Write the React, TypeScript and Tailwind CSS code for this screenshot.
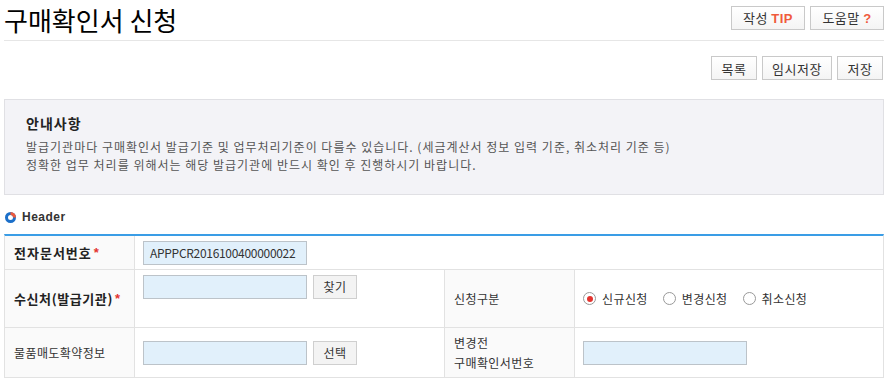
import React from "react";

const font = "font-['Noto_Sans_CJK_KR','Noto_Sans',sans-serif]";

function Btn({ children, className = "" }: { children: React.ReactNode; className?: string }) {
  return (
    <button
      className={`h-[24px] border border-[#c9c9c9] bg-gradient-to-b from-white to-[#f4f4f4] text-[13px] text-[#333] leading-none tracking-[0.5px] ${className}`}
    >
      {children}
    </button>
  );
}

function SmallBtn({ children }: { children: React.ReactNode }) {
  return (
    <button className="h-[24px] w-[44px] border border-[#cfcfcf] bg-[#f3f3f3] text-[12px] text-[#333] leading-none">
      {children}
    </button>
  );
}

function Field({ value = "" }: { value?: string }) {
  return (
    <div className="h-[24px] w-[164px] border border-[#bcc3c9] bg-[#e1f0fb] px-[6px] text-[12px] leading-[22px] tracking-[-0.3px] text-[#333]">
      {value}
    </div>
  );
}

function Radio({ checked, label }: { checked?: boolean; label: string }) {
  return (
    <label className="flex items-center gap-[6px] text-[12px] text-[#333]">
      <span className="flex h-[13px] w-[13px] items-center justify-center rounded-full border border-[#999] bg-white">
        {checked && <span className="h-[6px] w-[6px] rounded-full bg-[#e3342f]" />}
      </span>
      {label}
    </label>
  );
}

function Star() {
  return <span className="ml-[2px] font-['Liberation_Sans',sans-serif] text-[#e3342f]">*</span>;
}

export default function App() {
  return (
    <div className={`h-[381px] w-[890px] overflow-hidden bg-white ${font}`}>
      <div className="mx-[4px] w-[880px]">
        {/* title */}
        <div className="flex h-[41px] items-start justify-between border-b border-[#e6e6e6]">
          <h1 className="text-[26px] leading-[40px] text-black">구매확인서 신청</h1>
          <div className="mt-[6px] flex gap-[5px]">
            <Btn className="w-[74px]">
              작성 <span className="font-bold text-[#f05a3c] font-['Liberation_Sans',sans-serif]">TIP</span>
            </Btn>
            <Btn className="w-[74px]">
              도움말 <span className="font-bold text-[#f05a3c] font-['Liberation_Sans',sans-serif]">?</span>
            </Btn>
          </div>
        </div>

        <div className="mt-[15px] flex justify-end gap-[5px] pr-[1px]">
          <Btn className="w-[46px]">목록</Btn>
          <Btn className="w-[70px]">임시저장</Btn>
          <Btn className="w-[46px]">저장</Btn>
        </div>

        {/* notice */}
        <div className="mt-[19px] h-[96px] border border-[#e0e0e4] bg-[#f3f3f7] px-[21px] pt-[13px]">
          <div className="text-[14px] font-bold leading-[20px] tracking-[1px] text-[#222]">안내사항</div>
          <div className="mt-[5px] text-[12px] leading-[18px] tracking-[1px] text-[#555]">
            <p>발급기관마다 구매확인서 발급기준 및 업무처리기준이 다를수 있습니다. (세금계산서 정보 입력 기준, 취소처리 기준 등)</p>
            <p>정확한 업무 처리를 위해서는 해당 발급기관에 반드시 확인 후 진행하시기 바랍니다.</p>
          </div>
        </div>

        {/* section header */}
        <div className="mt-[13px] flex h-[18px] items-center gap-[6px] pl-[1px]">
          <svg width="11" height="11" viewBox="0 0 11 11">
            <circle cx="5.5" cy="5.5" r="4" fill="none" stroke="#1b6fc9" strokeWidth="3" />
            <path d="M5.5 1.5 A4 4 0 0 1 9.5 5.5" fill="none" stroke="#f05a3c" strokeWidth="3" />
          </svg>
          <span className="font-['Liberation_Sans',sans-serif] text-[12px] font-bold leading-[18px] tracking-[0.5px] text-[#333]">Header</span>
        </div>

        {/* table */}
        <div className="mt-[8px] w-[880px] border-t-2 border-[#3a9de6] border-x border-b border-x-[#e2e2e2] border-b-[#e2e2e2] text-[12px] tracking-[0.4px] text-[#333]">
          <div className="grid h-[34px] grid-cols-[130px_1fr] border-b border-[#e2e2e2]">
            <div className="flex items-center border-r border-[#e2e2e2] bg-[#fafafa] pl-[9px] text-[13px] font-bold tracking-[1px] text-[#222]">
              전자문서번호<Star />
            </div>
            <div className="flex items-center pl-[8px]">
              <Field value="APPPCR2016100400000022" />
            </div>
          </div>
          <div className="grid h-[58px] grid-cols-[130px_310px_130px_1fr] border-b border-[#e2e2e2]">
            <div className="flex items-center border-r border-[#e2e2e2] bg-[#fafafa] pl-[9px] text-[13px] font-bold tracking-[0.6px] text-[#222]">
              수신처(발급기관)<Star />
            </div>
            <div className="flex items-start gap-[6px] border-r border-[#e2e2e2] pl-[8px] pt-[5px]">
              <Field />
              <SmallBtn>찾기</SmallBtn>
            </div>
            <div className="flex items-center border-r border-[#e2e2e2] bg-[#fafafa] pl-[9px]">신청구분</div>
            <div className="flex items-center gap-[15px] pl-[8px]">
              <Radio checked label="신규신청" />
              <Radio label="변경신청" />
              <Radio label="취소신청" />
            </div>
          </div>
          <div className="grid h-[49px] grid-cols-[130px_310px_130px_1fr]">
            <div className="flex items-center border-r border-[#e2e2e2] bg-[#fafafa] pl-[9px]">물품매도확약정보</div>
            <div className="flex items-center gap-[6px] border-r border-[#e2e2e2] pl-[8px]">
              <Field />
              <SmallBtn>선택</SmallBtn>
            </div>
            <div className="flex flex-col justify-center border-r border-[#e2e2e2] bg-[#fafafa] pl-[9px] leading-[20px]">
              <span>변경전</span>
              <span>구매확인서번호</span>
            </div>
            <div className="flex items-center pl-[8px]">
              <Field />
            </div>
          </div>
        </div>
      </div>
    </div>
  );
}
